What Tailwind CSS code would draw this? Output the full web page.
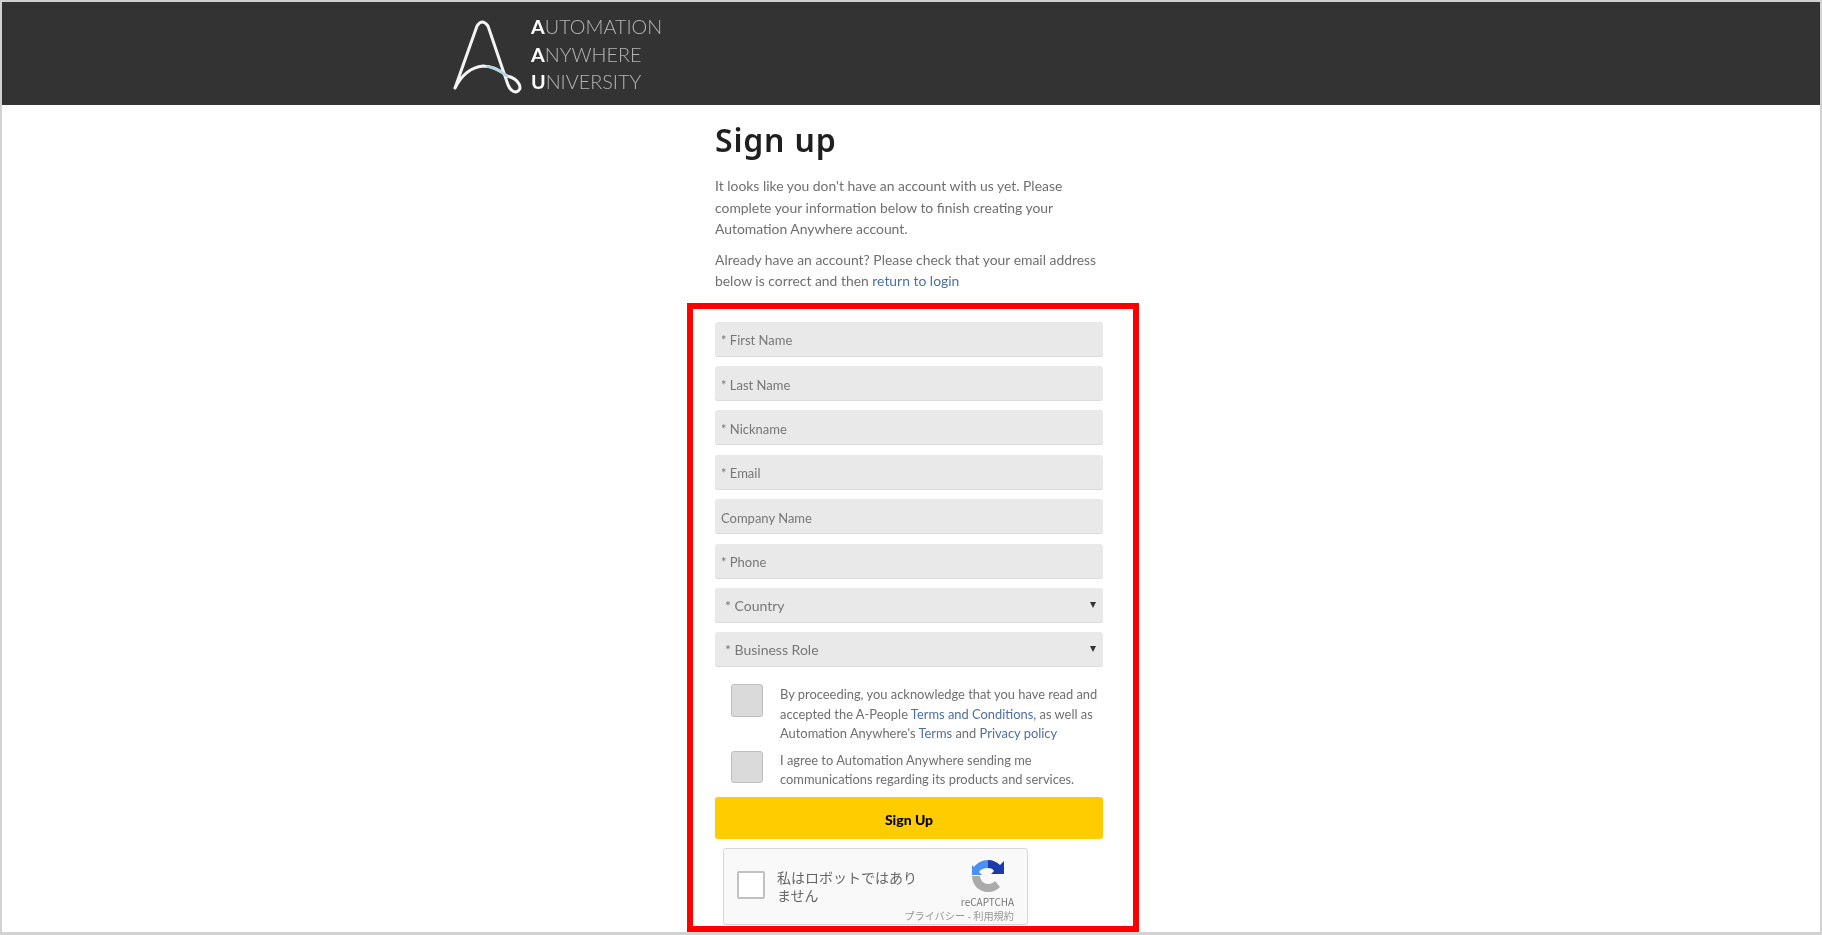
<!DOCTYPE html>
<html lang="en">
<head>
    <meta charset="UTF-8">
    <title>Sign up</title>
    <script src="https://cdn.jsdelivr.net/npm/@tailwindcss/browser@4"></script>
</head>
<body class="bg-white">
    <div class="h-[935px] overflow-hidden border-2 border-b-[3px] border-[#d2d2d2] font-['Lato','Liberation_Sans',sans-serif] text-[#6f6f6f] blur-[0.5px]">

        <!-- Header -->
        <header class="h-[103px] bg-[#333333] pl-[443px] flex items-center">
            <svg class="w-[90px] h-[90px] mt-[3px] shrink-0" viewBox="0 0 90 90" fill="none" stroke-linecap="round" stroke-linejoin="round">
                <path d="M10 78 L32 16 Q37 8 43 16 L62 72 Q65 82 71 82 Q77 80 74 74 Q71 68 62 66 Q50 56 38 56 Q20 58 10 78" stroke="#f4f4f4" stroke-width="3"/>
                <path d="M42 56.5 Q52 58 62 66" stroke="#a9d6e5" stroke-width="2.5"/>
            </svg>
            <div class="-ml-[4px] mt-[2px] text-[19.8px] font-light leading-[27.5px] text-[#b5b5b5]">
                <div><b class="font-bold text-white">A</b>UTOMATION</div>
                <div><b class="font-bold text-white">A</b>NYWHERE</div>
                <div><b class="font-bold text-white">U</b>NIVERSITY</div>
            </div>
        </header>

        <main class="ml-[713px] w-[388px]">
            <h1 class="mt-[13px] text-[32px] leading-[44px] font-semibold tracking-[0.8px] text-[#1f1f1f] font-['Noto_Sans',sans-serif]">Sign up</h1>

            <div class="mt-[13px] text-[13.9px] leading-[21.5px]">
                <p>It looks like you don't have an account with us yet. Please complete your information below to finish creating your Automation Anywhere account.</p>
                <p class="mt-[9px]">Already have an account? Please check that your email address below is correct and then <a class="text-[#4f6f9f]">return to login</a></p>
            </div>

            <!-- Form, with the red annotation frame -->
            <form class="mt-[11px] -ml-[28px] w-[452px] h-[629px] border-[6px] border-[#ff0000] pl-[22px] pr-[30px] pt-[13.2px]">
                <div class="flex flex-col gap-[9.4px]">
                    <input class="h-[35px] w-full rounded-[3px] bg-[#e9e9e9] px-[6px] pt-[2px] text-[13px] shadow-[inset_0_-1px_0_#dcdcdc] placeholder:text-[#777777]" placeholder="* First Name">
                    <input class="h-[35px] w-full rounded-[3px] bg-[#e9e9e9] px-[6px] pt-[2px] text-[13px] shadow-[inset_0_-1px_0_#dcdcdc] placeholder:text-[#777777]" placeholder="* Last Name">
                    <input class="h-[35px] w-full rounded-[3px] bg-[#e9e9e9] px-[6px] pt-[2px] text-[13px] shadow-[inset_0_-1px_0_#dcdcdc] placeholder:text-[#777777]" placeholder="* Nickname">
                    <input class="h-[35px] w-full rounded-[3px] bg-[#e9e9e9] px-[6px] pt-[2px] text-[13px] shadow-[inset_0_-1px_0_#dcdcdc] placeholder:text-[#777777]" placeholder="* Email">
                    <input class="h-[35px] w-full rounded-[3px] bg-[#e9e9e9] px-[6px] pt-[2px] text-[13px] shadow-[inset_0_-1px_0_#dcdcdc] placeholder:text-[#777777]" placeholder="Company Name">
                    <input class="h-[35px] w-full rounded-[3px] bg-[#e9e9e9] px-[6px] pt-[2px] text-[13px] shadow-[inset_0_-1px_0_#dcdcdc] placeholder:text-[#777777]" placeholder="* Phone">
                    <div class="relative">
                        <select class="h-[35px] w-full appearance-none rounded-[3px] bg-[#e9e9e9] px-[10px] text-[14px] text-[#777777] shadow-[inset_0_-1px_0_#dcdcdc]"><option>* Country</option></select>
                        <span class="absolute right-[7px] top-[14px] h-0 w-0 border-x-[3px] border-t-[6px] border-x-transparent border-t-[#333333]"></span>
                    </div>
                    <div class="relative">
                        <select class="h-[35px] w-full appearance-none rounded-[3px] bg-[#e9e9e9] px-[10px] text-[14px] text-[#777777] shadow-[inset_0_-1px_0_#dcdcdc]"><option>* Business Role</option></select>
                        <span class="absolute right-[7px] top-[14px] h-0 w-0 border-x-[3px] border-t-[6px] border-x-transparent border-t-[#333333]"></span>
                    </div>
                </div>

                <div class="mt-[16.7px] flex text-[12.9px] leading-[19.5px]">
                    <span class="ml-[16px] mr-[17px] h-[33px] w-[32px] shrink-0 rounded-[3px] border border-[#bdbdbd] bg-[#dadada]"></span>
                    <p class="mt-[1px]">By proceeding, you acknowledge that you have read and accepted the A-People <a class="text-[#4f6f9f]">Terms and Conditions,</a> as well as Automation Anywhere's <a class="text-[#4f6f9f]">Terms</a> and <a class="text-[#4f6f9f]">Privacy policy</a></p>
                </div>
                <div class="mt-[7px] flex text-[12.9px] leading-[19.5px]">
                    <span class="ml-[16px] mr-[17px] h-[32px] w-[32px] shrink-0 rounded-[3px] border border-[#bdbdbd] bg-[#dadada]"></span>
                    <p>I agree to Automation Anywhere sending me communications regarding its products and services.</p>
                </div>

                <button type="button" class="mt-[7.5px] h-[42px] w-full rounded-[3px] bg-[#ffcc00] pt-[2px] text-[14px] font-black text-black">Sign Up</button>

                <!-- reCAPTCHA box -->
                <div class="ml-[8px] mt-[9px] flex h-[77px] w-[305px] flex-col rounded-[3px] border border-[#d6d6d6] bg-[#f9f9f9] font-['Noto_Sans_CJK_JP',sans-serif]">
                    <div class="flex h-[59px] shrink-0">
                        <span class="ml-[13px] mt-[22px] h-[28px] w-[28px] shrink-0 rounded-[2px] border-2 border-[#c1c1c1] bg-white"></span>
                        <p class="ml-[12px] mt-[19px] w-[145px] shrink-0 text-[14px] leading-[18px] text-[#666666]">私はロボットではありません</p>
                        <div class="ml-auto mr-[13px] flex w-[53px] shrink-0 flex-col items-center">
                            <svg class="mt-[11px] h-[32px] w-[32px] shrink-0" viewBox="0 0 32 32">
                                <path d="M16 0 C10 0 5 3 2 7 L0 5 V15 H10 L7 12 C9 9 12 8 16 8 Z" fill="#4a90f5"/>
                                <path d="M16 0 V8 C19 8 21 9 22 11 L19 14 H32 V1 L28 5 C25 2 21 0 16 0 Z" fill="#1c3aa9"/>
                                <path d="M0 16 C0 25 7 32 16 32 C21 32 25 30 28 27 L23 21 C21 23 19 24 16 24 C12 24 9 21 8 17 V16 Z" fill="#ababab"/>
                            </svg>
                            <span class="mt-[4px] whitespace-nowrap text-[10px] leading-[12px] text-[#777777]">reCAPTCHA</span>
                        </div>
                    </div>
                    <span class="mr-[13px] mt-[2px] self-end whitespace-nowrap text-[10.2px] leading-[12px] text-[#999999]">プライバシー - 利用規約</span>
                </div>
            </form>
        </main>
    </div>
</body>
</html>
